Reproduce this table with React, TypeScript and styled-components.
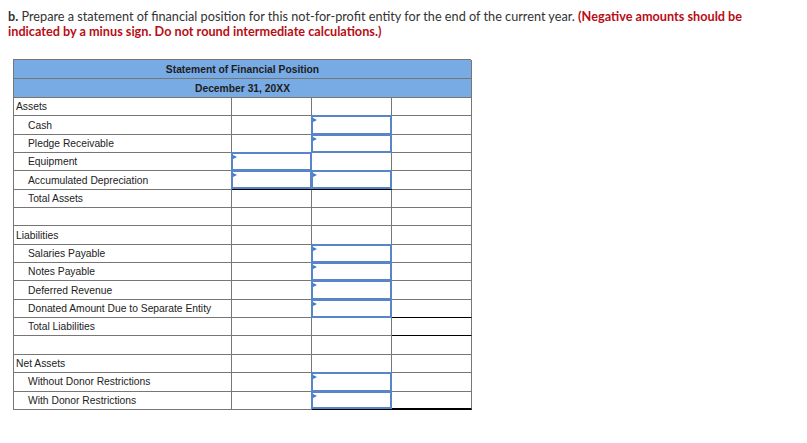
import React from "react";
import styled, { createGlobalStyle } from "styled-components";

const Global = createGlobalStyle`
  body { margin: 8px; background: #fff; }
`;

const Prompt = styled.div`
  font-family: Lato, "Open Sans", sans-serif;
  font-size: 12.7px;
  line-height: 15px;
  color: #333;
  margin-top: 1px;
  width: 780px;
`;

const Strong = styled.b`
  font-weight: 700;
`;

const Red = styled.span`
  color: #b80d16;
  font-weight: 700;
`;

const Table = styled.div`
  display: grid;
  grid-template-columns: 218px 80px 80px 80px;
  grid-template-rows: 19px 19px repeat(17, 18.35px);
  width: 458px;
  margin: 20px 0 0 5px;
  border-top: 1px solid #767676;
  border-left: 1px solid #767676;
  font-family: "Liberation Sans", Arial, sans-serif;
  font-size: 10.3px;
  color: #222;
  box-sizing: border-box;
`;

const Head = styled.div`
  grid-column: 1 / -1;
  background: #78aae4;
  border-right: 1px solid #767676;
  border-bottom: 1px solid #767676;
  display: flex;
  align-items: center;
  justify-content: center;
  font-weight: 700;
  color: #1d1d1d;
  box-sizing: border-box;
`;

const Label = styled.div<{ $indent?: boolean }>`
  border-right: 1px solid #767676;
  border-bottom: 1px solid #767676;
  display: flex;
  align-items: center;
  padding-left: ${(p) => (p.$indent ? "14px" : "2px")};
  box-sizing: border-box;
  white-space: nowrap;
`;

const Cell = styled.div<{ $bottom?: "line" | "thick" }>`
  position: relative;
  border-right: 1px solid #767676;
  border-bottom: ${(p) =>
    p.$bottom === "thick"
      ? "2px solid #000"
      : p.$bottom === "line"
      ? "1.5px solid #000"
      : "1px solid #767676"};
  box-sizing: border-box;
`;

const InputBox = styled.div`
  position: absolute;
  top: -1px;
  left: -1px;
  right: -1px;
  bottom: -1px;
  border: 2px solid #5785c7;
  background: #fff;
  box-sizing: border-box;
  &::before {
    content: "";
    position: absolute;
    left: 0;
    top: 1px;
    border-left: 4px solid #3d7bd0;
    border-top: 2.5px solid transparent;
    border-bottom: 2.5px solid transparent;
  }
`;

type Col = { input?: boolean; bottom?: "line" | "thick" };
type Row = { label: string; indent?: boolean; cols?: [Col?, Col?, Col?] };

const rows: Row[] = [
  { label: "Assets" },
  { label: "Cash", indent: true, cols: [{}, { input: true }, {}] },
  { label: "Pledge Receivable", indent: true, cols: [{}, { input: true }, {}] },
  { label: "Equipment", indent: true, cols: [{ input: true }, {}, {}] },
  {
    label: "Accumulated Depreciation",
    indent: true,
    cols: [{ input: true, bottom: "thick" }, { input: true, bottom: "thick" }, {}],
  },
  { label: "Total Assets", indent: true },
  { label: "" },
  { label: "Liabilities" },
  { label: "Salaries Payable", indent: true, cols: [{}, { input: true }, {}] },
  { label: "Notes Payable", indent: true, cols: [{}, { input: true }, {}] },
  { label: "Deferred Revenue", indent: true, cols: [{}, { input: true }, {}] },
  {
    label: "Donated Amount Due to Separate Entity",
    indent: true,
    cols: [{}, { input: true }, { bottom: "line" }],
  },
  { label: "Total Liabilities", indent: true, cols: [{}, {}, { bottom: "line" }] },
  { label: "" },
  { label: "Net Assets" },
  { label: "Without Donor Restrictions", indent: true, cols: [{}, { input: true }, {}] },
  {
    label: "With Donor Restrictions",
    indent: true,
    cols: [{}, { input: true, bottom: "thick" }, { bottom: "thick" }],
  },
];

export default function App() {
  return (
    <>
      <Global />
      <Prompt>
        <Strong>b.</Strong> Prepare a statement of financial position for this not-for-profit entity
        for the end of the current year.{" "}
        <Red>
          (Negative amounts should be indicated by a minus sign. Do not round intermediate
          calculations.)
        </Red>
      </Prompt>
      <Table>
        <Head>Statement of Financial Position</Head>
        <Head>December 31, 20XX</Head>
        {rows.map((r, i) => (
          <React.Fragment key={i}>
            <Label $indent={r.indent}>{r.label}</Label>
            {[0, 1, 2].map((c) => {
              const col = (r.cols && r.cols[c]) || {};
              return (
                <Cell key={c} $bottom={col.bottom}>
                  {col.input && <InputBox />}
                </Cell>
              );
            })}
          </React.Fragment>
        ))}
      </Table>
    </>
  );
}
